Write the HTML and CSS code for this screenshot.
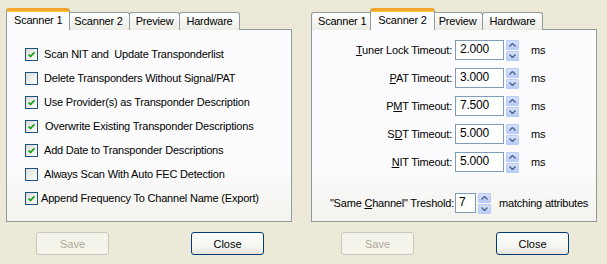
FILE: index.html
```html
<!DOCTYPE html>
<html>
<head>
<meta charset="utf-8">
<link rel="stylesheet" href="styles.css">
</head>
<body>
<div class="screen">
  <section class="dialog">
    <div class="tabs">
      <div class="tab active first">Scanner 1</div>
      <div class="tab">Scanner 2</div>
      <div class="tab">Preview</div>
      <div class="tab">Hardware</div>
    </div>
    <div class="page checks">
      <div class="check"><span class="box on"><svg viewBox="0 0 13 13"><path d="M3 6.5 L5.3 8.8 L10 4" /></svg></span><span class="ctext">Scan NIT and&nbsp; Update Transponderlist</span></div>
      <div class="check"><span class="box"></span><span class="ctext">Delete Transponders Without Signal/PAT</span></div>
      <div class="check"><span class="box on"><svg viewBox="0 0 13 13"><path d="M3 6.5 L5.3 8.8 L10 4" /></svg></span><span class="ctext">Use Provider(s) as Transponder Description</span></div>
      <div class="check"><span class="box on"><svg viewBox="0 0 13 13"><path d="M3 6.5 L5.3 8.8 L10 4" /></svg></span><span class="ctext wide">Overwrite Existing Transponder Descriptions</span></div>
      <div class="check"><span class="box on"><svg viewBox="0 0 13 13"><path d="M3 6.5 L5.3 8.8 L10 4" /></svg></span><span class="ctext">Add Date to Transponder Descriptions</span></div>
      <div class="check"><span class="box"></span><span class="ctext">Always Scan With Auto FEC Detection</span></div>
      <div class="check"><span class="box on"><svg viewBox="0 0 13 13"><path d="M3 6.5 L5.3 8.8 L10 4" /></svg></span><span class="ctext tight">Append Frequency To Channel Name (Export)</span></div>
    </div>
    <div class="buttons">
      <button class="btn" disabled>Save</button>
      <button class="btn">Close</button>
    </div>
  </section>

  <section class="dialog">
    <div class="tabs">
      <div class="tab first">Scanner 1</div>
      <div class="tab active">Scanner 2</div>
      <div class="tab">Preview</div>
      <div class="tab">Hardware</div>
    </div>
    <div class="page fields">
      <div class="field"><span class="flabel"><u>T</u>uner Lock Timeout:</span><span class="input">2.000</span><span class="spin"><span class="sb"><svg viewBox="0 0 7 4"><path d="M0.5 3.5 L3.5 0.5 L6.5 3.5"/></svg></span><span class="sb"><svg viewBox="0 0 7 4"><path d="M0.5 0.5 L3.5 3.5 L6.5 0.5"/></svg></span></span><span class="unit">ms</span></div>
      <div class="field"><span class="flabel"><u>P</u>AT Timeout:</span><span class="input">3.000</span><span class="spin"><span class="sb"><svg viewBox="0 0 7 4"><path d="M0.5 3.5 L3.5 0.5 L6.5 3.5"/></svg></span><span class="sb"><svg viewBox="0 0 7 4"><path d="M0.5 0.5 L3.5 3.5 L6.5 0.5"/></svg></span></span><span class="unit">ms</span></div>
      <div class="field"><span class="flabel">P<u>M</u>T Timeout:</span><span class="input">7.500</span><span class="spin"><span class="sb"><svg viewBox="0 0 7 4"><path d="M0.5 3.5 L3.5 0.5 L6.5 3.5"/></svg></span><span class="sb"><svg viewBox="0 0 7 4"><path d="M0.5 0.5 L3.5 3.5 L6.5 0.5"/></svg></span></span><span class="unit">ms</span></div>
      <div class="field"><span class="flabel">S<u>D</u>T Timeout:</span><span class="input">5.000</span><span class="spin"><span class="sb"><svg viewBox="0 0 7 4"><path d="M0.5 3.5 L3.5 0.5 L6.5 3.5"/></svg></span><span class="sb"><svg viewBox="0 0 7 4"><path d="M0.5 0.5 L3.5 3.5 L6.5 0.5"/></svg></span></span><span class="unit">ms</span></div>
      <div class="field"><span class="flabel"><u>N</u>IT Timeout:</span><span class="input">5.000</span><span class="spin"><span class="sb"><svg viewBox="0 0 7 4"><path d="M0.5 3.5 L3.5 0.5 L6.5 3.5"/></svg></span><span class="sb"><svg viewBox="0 0 7 4"><path d="M0.5 0.5 L3.5 3.5 L6.5 0.5"/></svg></span></span><span class="unit">ms</span></div>
      <div class="field same"><span class="flabel">"Same <u>C</u>hannel" Treshold:</span><span class="input small">7</span><span class="spin"><span class="sb"><svg viewBox="0 0 7 4"><path d="M0.5 3.5 L3.5 0.5 L6.5 3.5"/></svg></span><span class="sb"><svg viewBox="0 0 7 4"><path d="M0.5 0.5 L3.5 3.5 L6.5 0.5"/></svg></span></span><span class="unit">matching attributes</span></div>
    </div>
    <div class="buttons">
      <button class="btn" disabled>Save</button>
      <button class="btn">Close</button>
    </div>
  </section>
</div>
</body>
</html>
```

FILE: styles.css
```css
html, body {
  margin: 0;
  padding: 0;
  background: #ECE9D8;
  width: 607px;
  height: 264px;
  overflow: hidden;
  font-family: "Liberation Sans", Arial, sans-serif;
  font-size: 11px;
  letter-spacing: -0.2px;
  color: #000;
}

.screen {
  display: flex;
  gap: 19px;
  padding: 8px 0 0 6px;
}

.dialog {
  width: 286px;
  display: flex;
  flex-direction: column;
}

.tabs {
  display: flex;
  align-items: flex-end;
  height: 22px;
  position: relative;
  z-index: 1;
  margin-bottom: -1px;
}

.tab {
  height: 17px;
  line-height: 17px;
  padding: 0 6px;
  border: 1px solid #919B9C;
  border-bottom: none;
  border-radius: 3px 3px 0 0;
  background: linear-gradient(#FFFFFF, #F3F3EF 60%, #ECEBE6);
  margin-right: -1px;
  white-space: nowrap;
  box-sizing: content-box;
}

.tab.active {
  height: 19px;
  line-height: 19px;
  background: #FCFCFE;
  border-top: 3px solid #F3A530;
  box-shadow: inset 0 1px 0 #FFC83C;
  margin: 0 -3px 0 -2px;
  padding: 0 7px;
  position: relative;
  z-index: 2;
}

.tab.active.first {
  margin-left: 0;
}

.page {
  border: 1px solid #919B9C;
  background: linear-gradient(#FCFCFE 70%, #F4F3EE);
  box-sizing: content-box;
}

.checks {
  display: flex;
  flex-direction: column;
  padding-left: 18px;
  padding-top: 12px;
  height: 179px;
}

.check {
  display: flex;
  align-items: center;
  height: 24px;
}

.box {
  width: 11px;
  height: 11px;
  border: 1px solid #1C5180;
  background: linear-gradient(135deg, #DCDCD7, #FFFFFF);
  display: inline-flex;
  flex: none;
}

.box svg {
  width: 11px;
  height: 11px;
}

.box svg path {
  fill: none;
  stroke: #21A121;
  stroke-width: 2;
}

.ctext {
  margin-left: 6px;
}

.ctext.wide {
  margin-left: 7px;
}

.ctext.tight {
  margin-left: 3px;
}

.fields {
  display: flex;
  flex-direction: column;
  padding-top: 10px;
  height: 181px;
}

.field {
  display: flex;
  align-items: center;
  height: 20px;
  margin-bottom: 8px;
}

.field.same {
  margin-top: 13px;
}

.flabel {
  width: 140px;
  text-align: right;
  margin-right: 3px;
  white-space: nowrap;
}

.field.same .flabel {
  width: 142px;
  margin-right: 1px;
}

.input {
  width: 43px;
  height: 18px;
  line-height: 17px;
  border: 1px solid #7F9DB9;
  background: #fff;
  padding-left: 4px;
  box-sizing: content-box;
  font-size: 12px;
}

.input.small {
  width: 16px;
  padding-left: 3px;
}

.spin {
  display: flex;
  flex-direction: column;
  gap: 1px;
  margin-left: 2px;
  width: 13px;
}

.sb {
  height: 8px;
  border: 1px solid #B8CAF5;
  border-radius: 1px;
  background: linear-gradient(#D6E1FC, #B8CCF8);
  display: flex;
  align-items: center;
  justify-content: center;
}

.sb svg {
  width: 7px;
  height: 4px;
}

.sb svg path {
  fill: none;
  stroke: #4D6185;
  stroke-width: 1.4;
}

.unit {
  margin-left: 12px;
  white-space: nowrap;
}

.field.same .unit {
  margin-left: 8px;
}

.buttons {
  display: flex;
  padding-left: 30px;
  margin-top: 10px;
  gap: 82px;
}

.btn {
  width: 73px;
  height: 23px;
  font-family: "Liberation Sans", Arial, sans-serif;
  font-size: 11px;
  color: #000;
  border: 1px solid #003C74;
  border-radius: 3px;
  background: linear-gradient(#FFFFFF, #F4F4F0 70%, #E3E2DA);
  padding: 0;
}

.btn:disabled {
  border-color: #C9C7BA;
  color: #ACA899;
  background: #F5F4EA;
}
```
